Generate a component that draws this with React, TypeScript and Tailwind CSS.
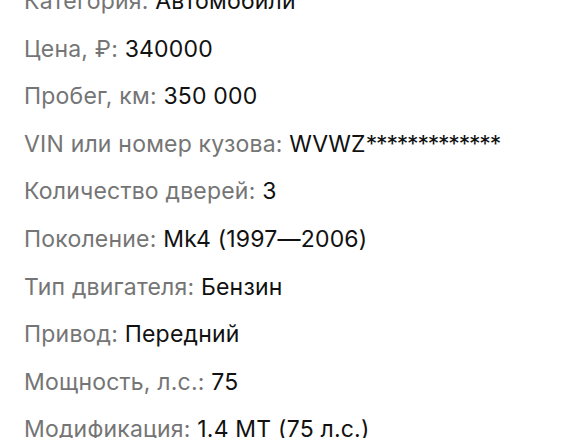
import React from "react";

const params: [string, React.ReactNode][] = [
  ["Категория", "Автомобили"],
  ["Цена, ₽", "340000"],
  ["Пробег, км", "350 000"],
  [
    "VIN или номер кузова",
    <>
      WVWZ<span className="tracking-[-1.2px]">*************</span>
    </>,
  ],
  ["Количество дверей", "3"],
  ["Поколение", "Mk4 (1997—2006)"],
  ["Тип двигателя", "Бензин"],
  ["Привод", "Передний"],
  ["Мощность, л.с.", "75"],
  ["Модификация", "1.4 MT (75 л.с.)"],
];

export default function App() {
  return (
    <div className="w-[584px] h-[438px] overflow-hidden bg-white font-['Inter',sans-serif]">
      <ul className="flex flex-col gap-[19.6px] px-6 -mt-[13px]">
        {params.map(([label, value]) => (
          <li key={label} className="text-[23px] leading-[28px] tracking-[0.2px] whitespace-nowrap">
            <span className="text-[#757575]">{label}: </span>
            <span className="text-[#111]">{value}</span>
          </li>
        ))}
      </ul>
    </div>
  );
}
